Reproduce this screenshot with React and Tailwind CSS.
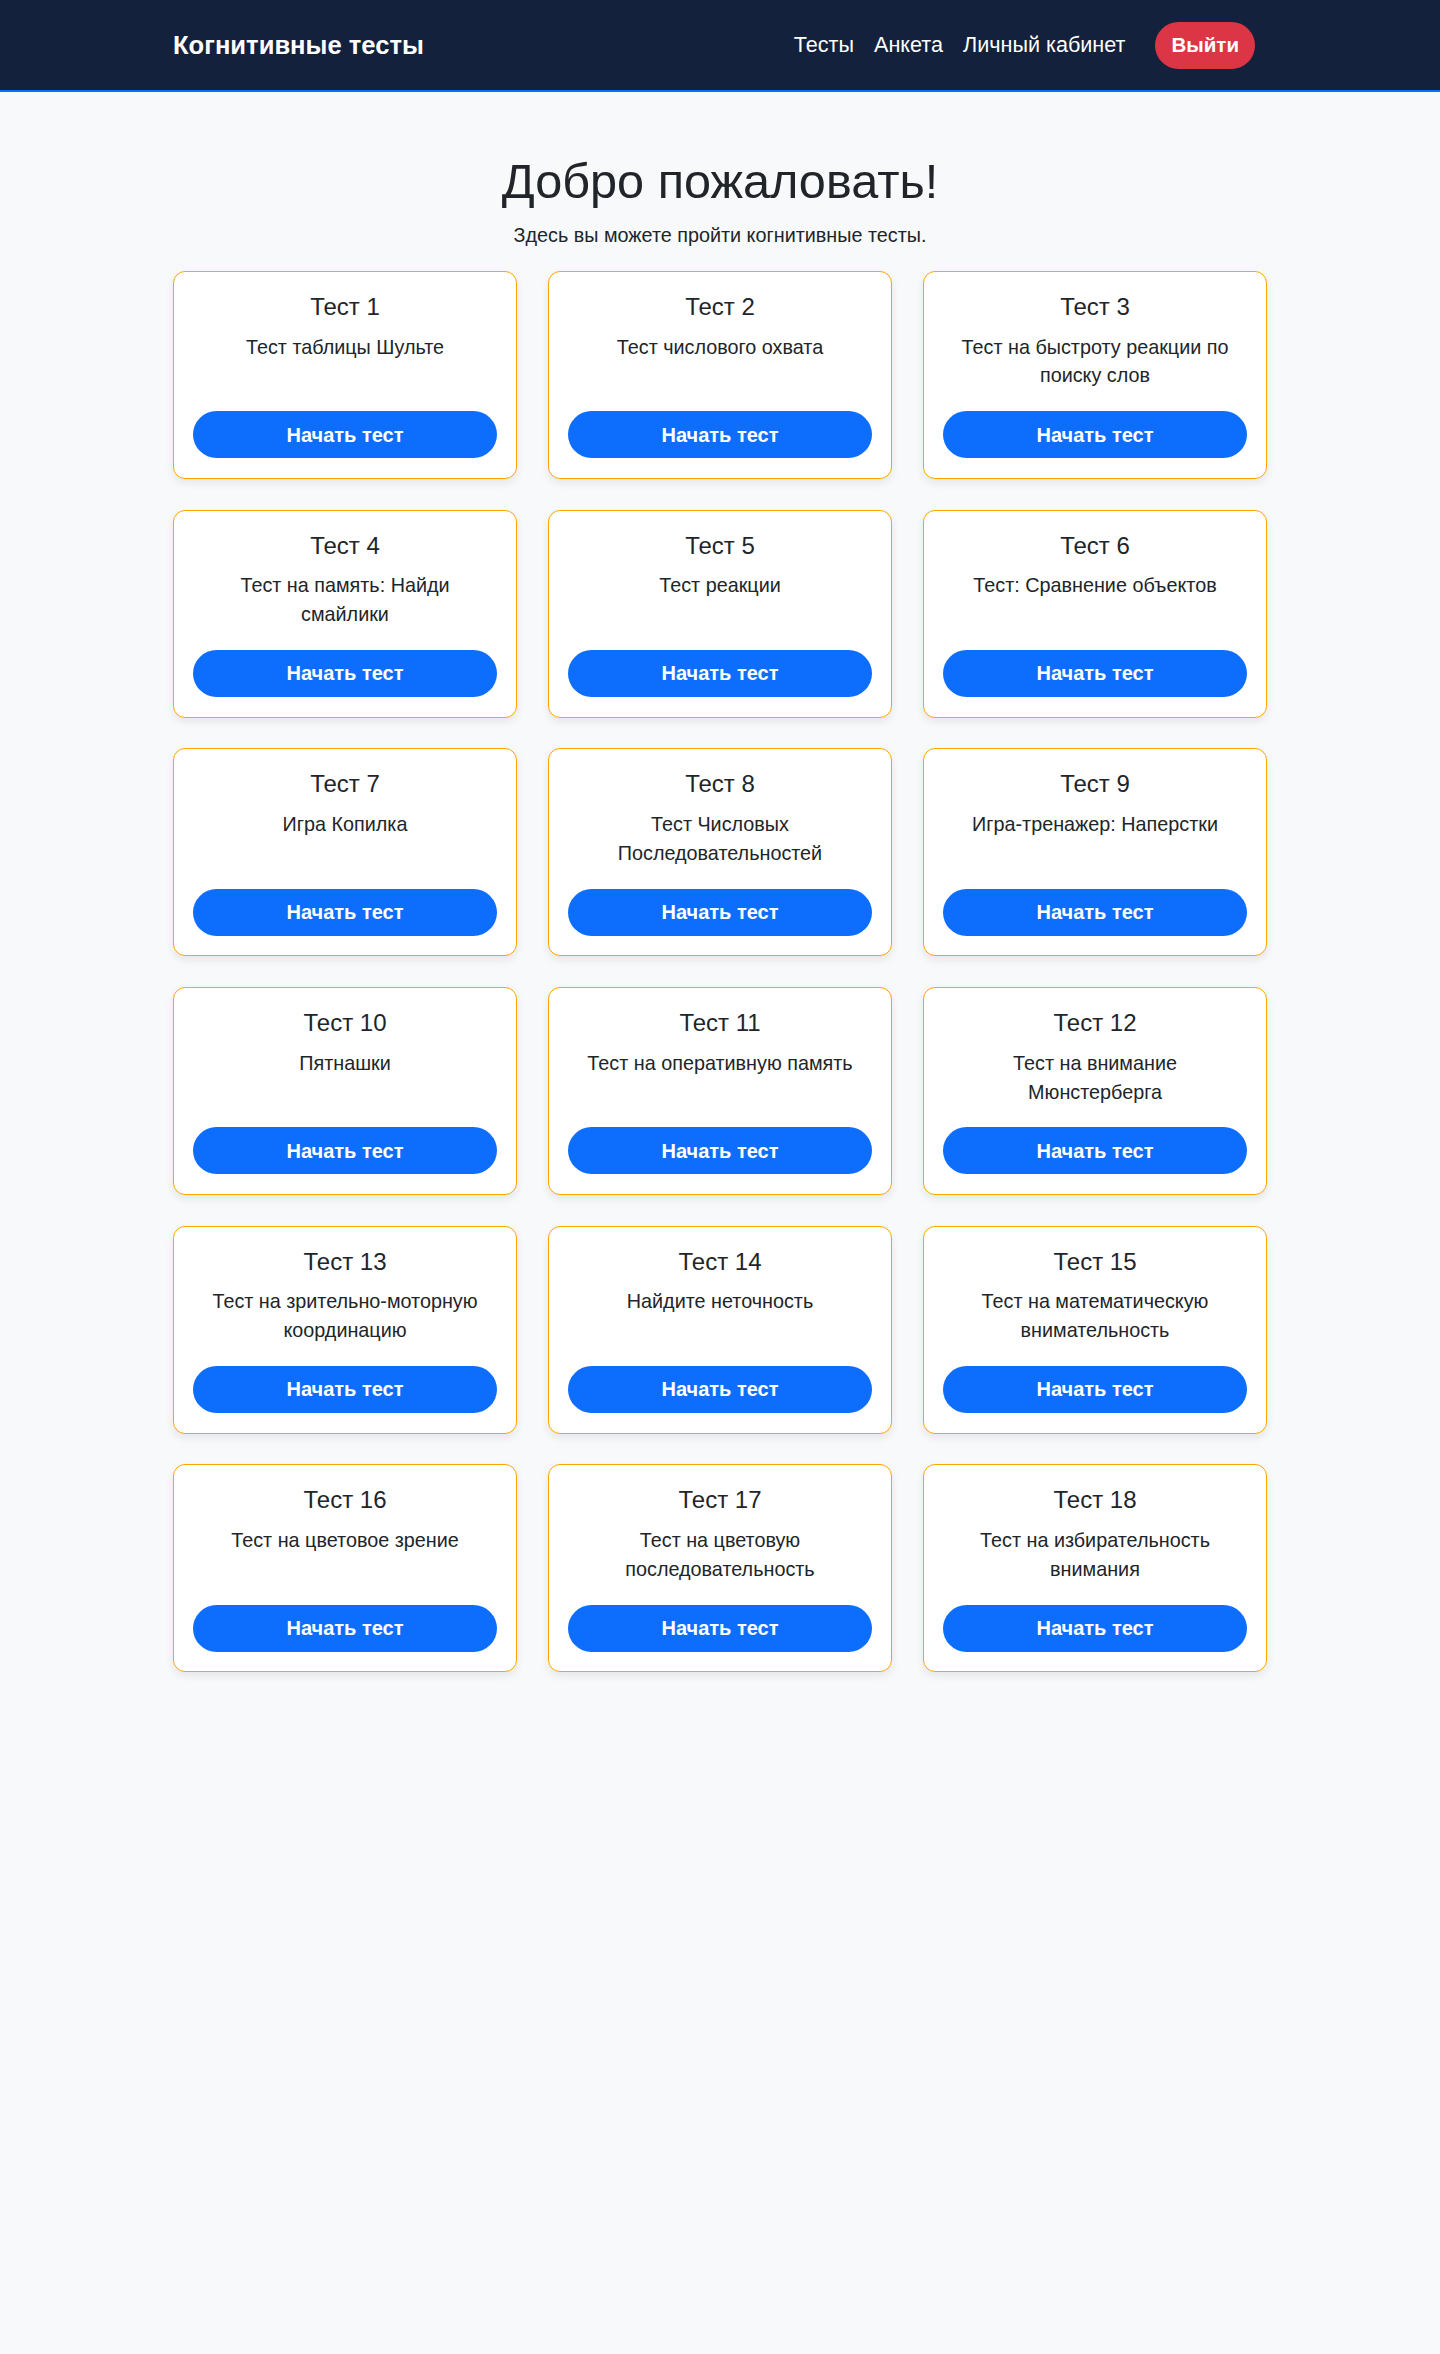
import React from "react";

const tests = [
  ["Тест 1", ["Тест таблицы Шульте"]],
  ["Тест 2", ["Тест числового охвата"]],
  ["Тест 3", ["Тест на быстроту реакции по", "поиску слов"]],
  ["Тест 4", ["Тест на память: Найди", "смайлики"]],
  ["Тест 5", ["Тест реакции"]],
  ["Тест 6", ["Тест: Сравнение объектов"]],
  ["Тест 7", ["Игра Копилка"]],
  ["Тест 8", ["Тест Числовых", "Последовательностей"]],
  ["Тест 9", ["Игра-тренажер: Наперстки"]],
  ["Тест 10", ["Пятнашки"]],
  ["Тест 11", ["Тест на оперативную память"]],
  ["Тест 12", ["Тест на внимание", "Мюнстерберга"]],
  ["Тест 13", ["Тест на зрительно-моторную", "координацию"]],
  ["Тест 14", ["Найдите неточность"]],
  ["Тест 15", ["Тест на математическую", "внимательность"]],
  ["Тест 16", ["Тест на цветовое зрение"]],
  ["Тест 17", ["Тест на цветовую", "последовательность"]],
  ["Тест 18", ["Тест на избирательность", "внимания"]],
];

function Card({ title, lines }) {
  return (
    <div className="flex flex-col items-center rounded-[12px] border border-[#ffa500] bg-white px-[19px] pt-[21px] pb-[19.6px] text-center text-[#212529] shadow-[0_4px_8px_rgba(0,0,0,0.08)]">
      <h5 className="mb-[11px] text-[24px] leading-[28.8px] font-normal">{title}</h5>
      <p className="mb-[21px] min-h-[57.6px] text-[19.8px] leading-[28.8px]">
        {lines.map((l, i) => (
          <span key={i} className="block whitespace-nowrap">
            {l}
          </span>
        ))}
      </p>
      <button className="h-[47px] w-full rounded-full bg-[#0d6efd] text-[20px] font-bold text-white">
        Начать тест
      </button>
    </div>
  );
}

export default function App() {
  return (
    <div className="min-h-screen bg-[#f8f9fa] font-['Liberation_Sans',Arial,sans-serif]">
      <nav className="h-[92px] border-b-2 border-[#0d6efd] bg-[#14213d]">
        <div className="mx-auto flex h-[90px] w-[1094px] items-center justify-between pr-[12px]">
          <a className="text-[25.6px] font-bold text-white">Когнитивные тесты</a>
          <div className="flex items-center">
            <a className="px-[10px] text-[21.6px] text-white">Тесты</a>
            <a className="px-[10px] text-[21.6px] text-white">Анкета</a>
            <a className="px-[10px] text-[21.6px] text-white">Личный кабинет</a>
            <button className="ml-[20px] h-[47px] rounded-full bg-[#dc3545] px-[16px] text-[20.5px] font-bold text-white">
              Выйти
            </button>
          </div>
        </div>
      </nav>
      <main className="mx-auto w-[1094px] pt-[61px]">
        <h1 className="mb-[10.5px] text-center text-[48.6px] leading-[57.6px] font-normal text-[#212529]">
          Добро пожаловать!
        </h1>
        <p className="mb-[21px] text-center text-[19.8px] leading-[28.8px] text-[#212529]">
          Здесь вы можете пройти когнитивные тесты.
        </p>
        <div className="grid grid-cols-3 gap-x-[31px] gap-y-[30.7px]">
          {tests.map(([t, l]) => (
            <Card key={t} title={t} lines={l} />
          ))}
        </div>
      </main>
    </div>
  );
}
